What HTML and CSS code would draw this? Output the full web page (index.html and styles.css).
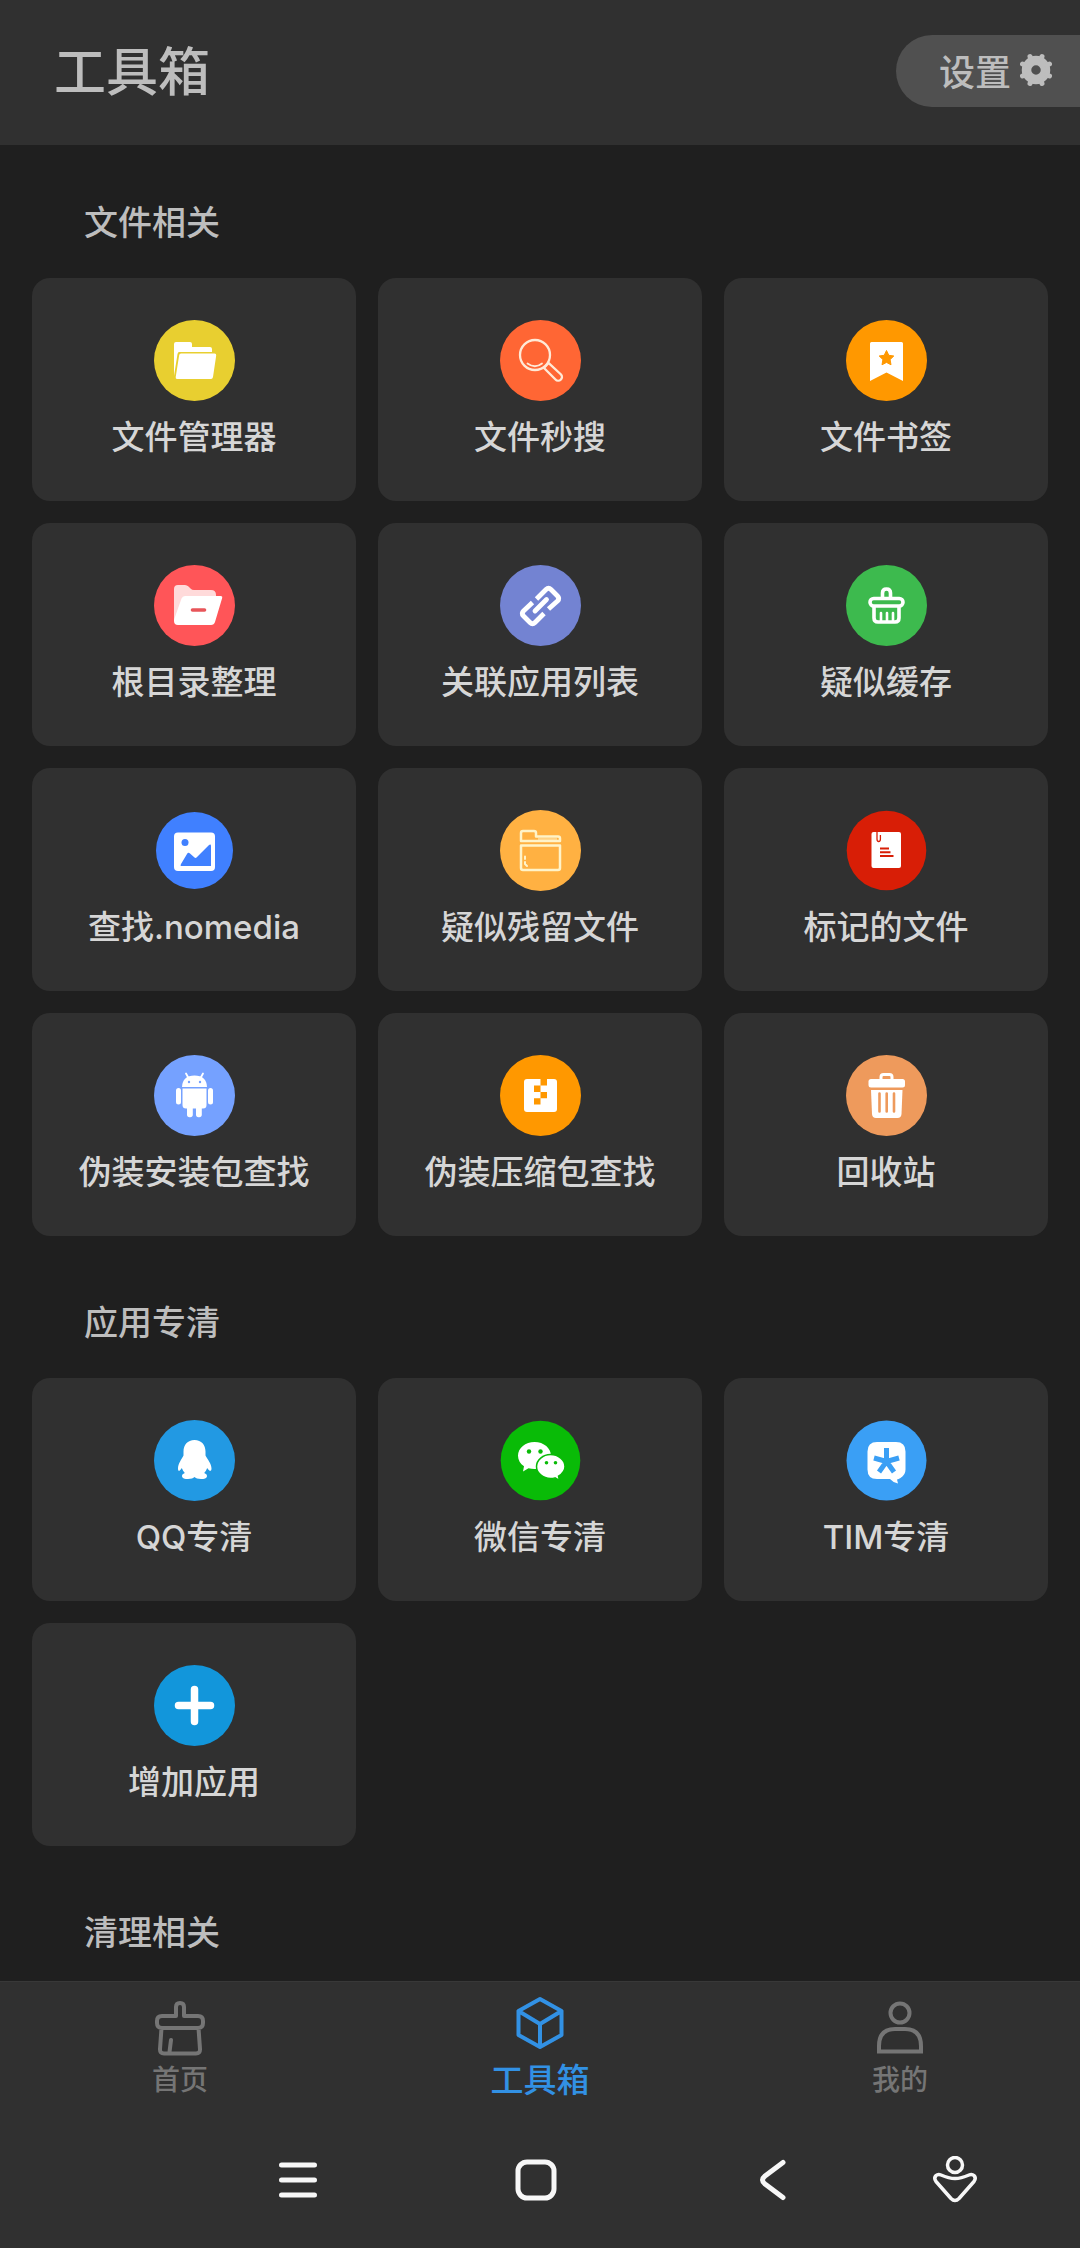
FILE: index.html
```html
<!DOCTYPE html>
<html lang="zh-CN">
<head>
  <meta charset="UTF-8">
  <meta name="viewport" content="width=device-width, initial-scale=1.0">
  <title>工具箱</title>
  <link rel="stylesheet" href="styles.css">
</head>
<body>
  <header class="header">
    <h1 class="header-title">工具箱</h1>
    <button class="settings" type="button">
      设置
      <svg class="gear" viewBox="0 0 34 34">
        <circle cx="17" cy="17" r="9.500" fill="none" stroke="currentColor" stroke-width="9.500"/>
        <path d="M12 6L11 3.500M22 6l1-2.500M12 28l-1 2.500M22 28l1 2.500M6 12l-2.500-1M6 22l-2.500 1M28 12l2.500-1M28 22l2.500 1" stroke="currentColor" stroke-width="5" stroke-linecap="round"/>
      </svg>
    </button>
  </header>

  <main class="content">
    <section class="section">
      <h2 class="section-title">文件相关</h2>
      <div class="grid">
        <button class="card" type="button">
          <svg class="icon" viewBox="0 0 81 81">
            <circle cx="40.5" cy="40.5" r="40.5" fill="#e8cf30"/>
            <path d="M20 56V24q0-2 2-2h14q2 0 2 2v3h18q2 0 2 2v3H25q-1 0-1.500 2z" fill="#fff"/>
            <path d="M27 33.500h33.500q2 0 1.700 2L59 57q-.4 2-2 2H23q-1.600 0-1.300-2l3.500-22q.3-1.500 1.800-1.500z" fill="#fff"/>
          </svg>
          <span class="label">文件管理器</span>
        </button>
        <button class="card" type="button">
          <svg class="icon" viewBox="0 0 81 81">
            <circle cx="40.5" cy="40.5" r="40.5" fill="#ff6634"/>
            <g fill="none" stroke="#ffe9d6" stroke-width="2.300" stroke-linecap="round">
              <circle cx="35" cy="35" r="15"/>
              <path d="M27.500 43.500q7.500 5.500 14.500 0" stroke-width="1.800"/>
              <path d="M44 48l11.500 11.500a3.600 3.600 0 0 0 5.500-5L48.500 43z"/>
            </g>
          </svg>
          <span class="label">文件秒搜</span>
        </button>
        <button class="card" type="button">
          <svg class="icon" viewBox="0 0 81 81">
            <circle cx="40.5" cy="40.5" r="40.5" fill="#ff9800"/>
            <path d="M25.500 22h30q1.500 0 1.500 1.500V61l-16.500-8.500L24 61V23.500q0-1.500 1.500-1.500z" fill="#fff"/>
            <path d="M40.500 30.500l2.300 4.800 5 .7-3.700 3.600.9 5.200-4.500-2.400-4.500 2.400.9-5.200-3.700-3.600 5-.7z" fill="#ff9800" stroke="#ff9800" stroke-linejoin="round"/>
          </svg>
          <span class="label">文件书签</span>
        </button>
        <button class="card" type="button">
          <svg class="icon" viewBox="0 0 81 81">
            <circle cx="40.5" cy="40.5" r="40.5" fill="#ff5558"/>
            <path d="M20 56V24q0-4 4-4h7q2 0 3.500 1.500l2 2Q38 25 40 25h17q5 0 5 5v6L30 56z" fill="#ffdada"/>
            <path d="M31 31h35.500q2.300 0 1.600 2.300L61 57q-1 3-4 3H24q-4 0-4-4 0-2 1-4l6.500-18.500Q28.500 31 31 31z" fill="#fff"/>
            <path d="M38.500 45h12" stroke="#e8555a" stroke-width="3.600" stroke-linecap="round"/>
          </svg>
          <span class="label">根目录整理</span>
        </button>
        <button class="card" type="button">
          <svg class="icon" viewBox="0 0 81 81">
            <circle cx="40.5" cy="40.5" r="40.5" fill="#7383d2"/>
            <g fill="none" stroke="#fff" stroke-width="4.800" stroke-linejoin="round">
              <path d="M36.500 34l9.500-9.500q2.500-2.500 5 0l6.500 6.500q2.500 2.500 0 5L48.500 44"/>
              <path d="M32.500 37.500L23.500 46q-2.500 2.500 0 5l6.500 6.500q2.500 2.500 5 0l9-9"/>
              <path d="M35 46l11.500-11.500" stroke-linecap="round"/>
            </g>
          </svg>
          <span class="label">关联应用列表</span>
        </button>
        <button class="card" type="button">
          <svg class="icon" viewBox="0 0 81 81">
            <circle cx="40.5" cy="40.5" r="40.5" fill="#3dba4e"/>
            <g fill="none" stroke="#fff" stroke-width="3.600" stroke-linecap="round" stroke-linejoin="round">
              <path d="M36.500 33v-5q0-4 4-4t4 4v5"/>
              <rect x="24" y="33.500" width="33" height="7.500" rx="3.700"/>
              <path d="M28 42v11q0 4 4 4h17q4 0 4-4V42"/>
              <path d="M35 48v8M41 48v8M47 48v8" stroke-width="2.600"/>
            </g>
          </svg>
          <span class="label">疑似缓存</span>
        </button>
        <button class="card" type="button">
          <svg class="icon" viewBox="0 0 81 81">
            <circle cx="40.5" cy="40.5" r="38.5" fill="#4080ff"/>
            <rect x="20" y="22.500" width="41" height="38.500" rx="4" fill="#fff"/>
            <circle cx="31" cy="32.500" r="3.500" fill="#4080ff"/>
            <path d="M27 56q-1 0 0-2l6-10q1.200-2 3-.5l4.500 4q1.200 1 2.500-.5L54.500 35.500Q57 33.500 57 36v20z" fill="#4080ff"/>
          </svg>
          <span class="label">查找.nomedia</span>
        </button>
        <button class="card" type="button">
          <svg class="icon" viewBox="0 0 81 81">
            <circle cx="40.5" cy="40.5" r="40.5" fill="#ffb142"/>
            <g fill="none" stroke="#fff3c8" stroke-width="2.500" stroke-linejoin="round">
              <path d="M21 31V23q0-2 2-2h11q2 0 2 2v3.500h22q2 0 2 2V31z"/>
              <path d="M38 29h19" stroke-width="1"/>
              <path d="M21 35.500h39V58q0 2-2 2H23q-2 0-2-2z"/>
              <path d="M25 46.500v2.500M25 52v2l2 2" stroke-width="2" stroke-linecap="round"/>
            </g>
          </svg>
          <span class="label">疑似残留文件</span>
        </button>
        <button class="card" type="button">
          <svg class="icon" viewBox="0 0 81 81">
            <circle cx="40.5" cy="40.5" r="39.8" fill="#d81e06"/>
            <rect x="25.500" y="22" width="29.500" height="36" rx="2" fill="#fff"/>
            <path d="M31 21.500v7.500q0 2.500 1.700 2.500t1.700-2.500v-4" fill="none" stroke="#d81e06" stroke-width="1.300"/>
            <path d="M34 38.500h9M34 42.200h10.500M34 46h13.500" stroke="#d81e06" stroke-width="2"/>
          </svg>
          <span class="label">标记的文件</span>
        </button>
        <button class="card" type="button">
          <svg class="icon" viewBox="0 0 81 81">
            <circle cx="40.5" cy="40.5" r="40.5" fill="#75a1ff"/>
            <g fill="#fff">
              <path d="M28 32q.5-11.500 12.500-11.500T53 32z"/>
              <path d="M32 18.500l2.500 4.500M49 18.500L46.500 23" stroke="#fff" stroke-width="1.800" stroke-linecap="round"/>
              <path d="M28.500 33.500h24V50q0 3.500-3.500 3.500H32q-3.500 0-3.500-3.500z"/>
              <rect x="22" y="33" width="5" height="16.500" rx="2.500"/>
              <rect x="54" y="33" width="5" height="16.500" rx="2.500"/>
              <rect x="33" y="49" width="5.800" height="13.200" rx="2.600"/>
              <rect x="42" y="49" width="5.800" height="13.200" rx="2.600"/>
            </g>
            <circle cx="35" cy="27" r="1.200" fill="#75a1ff"/>
            <circle cx="46" cy="27" r="1.200" fill="#75a1ff"/>
          </svg>
          <span class="label">伪装安装包查找</span>
        </button>
        <button class="card" type="button">
          <svg class="icon" viewBox="0 0 81 81">
            <circle cx="40.5" cy="40.5" r="40.5" fill="#ff9800"/>
            <rect x="24" y="24" width="33" height="33" rx="3" fill="#fff"/>
            <path d="M40.500 24H47v6.500h-6.500zM34 30.500h6.500V37H34zM40.500 37H47v6.200h-6.500zM34 43.200h6.500v6.300H34z" fill="#ff9800"/>
          </svg>
          <span class="label">伪装压缩包查找</span>
        </button>
        <button class="card" type="button">
          <svg class="icon" viewBox="0 0 81 81">
            <circle cx="40.5" cy="40.5" r="40.5" fill="#ee9a5c"/>
            <path d="M35 25v-3q0-2.500 2.500-2.500h6q2.500 0 2.500 2.500v3" fill="none" stroke="#fff" stroke-width="3"/>
            <rect x="22.500" y="24" width="36.500" height="8.500" rx="2.500" fill="#fff"/>
            <path d="M25 35h31.500L55.500 59q-.3 4-4 4H30q-3.700 0-4-4z" fill="#fff"/>
            <path d="M33.500 38.500v18M40.700 38.500v18M48 38.500v18" stroke="#ee9a5c" stroke-width="2.600" stroke-linecap="round"/>
          </svg>
          <span class="label">回收站</span>
        </button>
      </div>
    </section>

    <section class="section">
      <h2 class="section-title">应用专清</h2>
      <div class="grid">
        <button class="card" type="button">
          <svg class="icon" viewBox="0 0 81 81">
            <circle cx="40.5" cy="40.5" r="40.5" fill="#2299e3"/>
            <path d="M40.500 20c-7 0-11 5-11 11.500v4c-2 3.500-5.500 8.500-5.500 13 0 3.500 1.800 2.800 3.800-.5.700 2 1.700 3.700 3 5-2 .8-2.800 1.800-2.800 3 0 2.500 3 3 6 3s5.500-1 6.500-2c1 1 3.500 2 6.500 2s6-.5 6-3c0-1.200-.8-2.200-2.800-3 1.300-1.300 2.300-3 3-5 2 3.300 4.300 4 4.300.5 0-4.500-4-9.500-6-13v-4C51.500 25 47.500 20 40.500 20z" fill="#fff"/>
          </svg>
          <span class="label">QQ专清</span>
        </button>
        <button class="card" type="button">
          <svg class="icon" viewBox="0 0 81 81">
            <circle cx="40.5" cy="40.5" r="39.8" fill="#09bb07"/>
            <path d="M34.500 22C25.500 22 18 28 18 35.700c0 4.300 2.300 8 6 10.500L23 51.500l5.500-3.200q3 .8 6 .8C44 49 51 43 51 35.700S44 22 34.500 22z" fill="#fff"/>
            <path d="M50.500 34.500C43 34.500 36.500 40 36.500 46.500S43 58.500 50.500 58.500q2.500 0 4.500-.6l4.500 2.600-1-4.300c3.500-2.200 6.500-5.200 6.500-9.700C65 40 58.500 34.500 50.500 34.500z" fill="#fff" stroke="#09bb07" stroke-width="1.500"/>
            <g fill="#09bb07">
              <circle cx="29" cy="31.500" r="2.200"/>
              <circle cx="40.500" cy="31.500" r="2.200"/>
              <circle cx="46.500" cy="42.800" r="1.800"/>
              <circle cx="55.500" cy="42.800" r="1.800"/>
            </g>
          </svg>
          <span class="label">微信专清</span>
        </button>
        <button class="card" type="button">
          <svg class="icon" viewBox="0 0 81 81">
            <circle cx="40.5" cy="40.5" r="40" fill="#3a9ff5"/>
            <path d="M31 22h19q9.500 0 9.500 9.500v18q0 5.500-5 8.500-2 1-3.500 1.500l1 4q-5-1-8-4.500H31q-9.500 0-9.500-9.500v-18Q21.500 22 31 22z" fill="#fff"/>
            <path d="M40.500 41.500V28M40.500 41.500L28 38M40.500 41.500L53 38M40.500 41.500L33 52M40.500 41.500L48 52" stroke="#3a9ff5" stroke-width="5"/>
          </svg>
          <span class="label">TIM专清</span>
        </button>
        <button class="card" type="button">
          <svg class="icon" viewBox="0 0 81 81">
            <circle cx="40.5" cy="40.5" r="40.5" fill="#1296db"/>
            <path d="M40.500 24.500v32M24.500 40.500h32" stroke="#fff" stroke-width="7.500" stroke-linecap="round"/>
          </svg>
          <span class="label">增加应用</span>
        </button>
      </div>
    </section>

    <section class="section">
      <h2 class="section-title">清理相关</h2>
    </section>
  </main>

  <footer class="footer">
    <nav class="tabs">
      <a class="tab" href="#home">
        <svg class="tab-icon" viewBox="0 0 60 60">
          <path d="M26 20V11q0-4 4-4t4 4v9h14q5 0 5 5v2q0 5-5 5H12q-5 0-5-5v-2q0-5 5-5zM11.500 32L10 53q-.2 4.500 4 4.500h32q4.200 0 4-4.500L48.500 32M21 44l-1.500 12"/>
        </svg>
        <span>首页</span>
      </a>
      <a class="tab active" href="#tools">
        <svg class="tab-icon" viewBox="0 0 60 60">
          <path d="M30 3L51.500 15v24L30 51 8.500 39V15zM8.500 15L30 28l21.500-13M30 28v23"/>
        </svg>
        <span>工具箱</span>
      </a>
      <a class="tab" href="#mine">
        <svg class="tab-icon person" viewBox="0 0 60 60">
          <circle cx="30" cy="17" r="9.500"/>
          <path d="M9 55.500V50Q9 33 25 33h10q16 0 16 17v5.500z"/>
        </svg>
        <span>我的</span>
      </a>
    </nav>

    <div class="sysbar">
      <button class="sys" type="button" aria-label="菜单">
        <svg class="sys-icon" viewBox="0 0 48 48"><path d="M7.500 9h33M7.500 24h33M7.500 39h33" stroke-width="5"/></svg>
      </button>
      <button class="sys" type="button" aria-label="主屏幕">
        <svg class="sys-icon" viewBox="0 0 48 48"><rect x="6" y="6" width="36" height="36" rx="9" stroke-width="5"/></svg>
      </button>
      <button class="sys" type="button" aria-label="返回">
        <svg class="sys-icon" viewBox="0 0 48 48"><path d="M33 6.500L15 20q-5 4 0 8L33 41.500" stroke-width="5"/></svg>
      </button>
      <button class="sys" type="button" aria-label="快捷手势">
        <svg class="sys-icon" viewBox="0 0 48 48">
          <circle cx="24" cy="9" r="7.500" stroke-width="3.500"/>
          <path d="M24 22.500q6 0 14-3.500 3-1.300 5 .5 2.500 2.500 0 6L28 42.500q-4 4-8 0L5 25.500q-2.500-3.500 0-6 2-1.800 5-.5 8 3.500 14 3.500z" stroke-width="3.500"/>
        </svg>
      </button>
    </div>
  </footer>
</body>
</html>
```

FILE: styles.css
```css
*, *::before, *::after {
  box-sizing: border-box;
}

body {
  margin: 0;
  height: 100vh;
  display: flex;
  flex-direction: column;
  background-color: #1f1f1f;
  color: #bdbdbd;
  font-family: Inter, "Noto Sans CJK SC", sans-serif;
  font-weight: 500;
}

button {
  margin: 0;
  padding: 0;
  border: 0;
  background: none;
  color: inherit;
  font: inherit;
}

svg {
  display: block;
}

.header {
  flex: none;
  height: 145px;
  display: flex;
  justify-content: space-between;
  align-items: flex-start;
  padding: 35px 0 0 54px;
  background-color: #303030;
}

.header-title {
  margin: 0;
  font-size: 52px;
  font-weight: 500;
  line-height: 76px;
}

.settings {
  display: flex;
  align-items: center;
  gap: 8px;
  height: 72px;
  padding: 0 27px 2px 43px;
  border-radius: 36px 0 0 36px;
  background-color: #505050;
  font-size: 36px;
}

.gear {
  width: 34px;
  height: 34px;
}

.content {
  flex: 1;
  min-height: 0;
  overflow-y: auto;
  scrollbar-width: none;
  padding: 23px 32px 0;
}

.section + .section {
  margin-top: 32px;
}

.section-title {
  margin: 0;
  padding-left: 52px;
  font-size: 34px;
  font-weight: 500;
  line-height: 110px;
}

.grid {
  display: grid;
  grid-template-columns: repeat(3, 1fr);
  gap: 22px;
}

.card {
  display: flex;
  flex-direction: column;
  align-items: center;
  height: 223px;
  padding-top: 42px;
  border-radius: 18px;
  background-color: #303030;
  color: #d6d6d6;
}

.icon {
  width: 81px;
  height: 81px;
}

.label {
  margin-top: 12px;
  font-size: 33px;
  line-height: 48px;
}

.footer {
  flex: none;
  border-top: 1px solid #383838;
  background-color: #303030;
}

.tabs {
  display: grid;
  grid-template-columns: repeat(3, 1fr);
  height: 130px;
  padding-top: 14px;
}

.tab {
  display: flex;
  flex-direction: column;
  align-items: center;
  color: #757575;
  font-size: 28px;
  line-height: 48px;
  text-decoration: none;
}

.tab.active {
  color: #3291e4;
  font-size: 33px;
}

.tab-icon {
  width: 60px;
  height: 60px;
  fill: none;
  stroke: currentColor;
  stroke-width: 4;
  stroke-linejoin: round;
  stroke-linecap: round;
}

.tab-icon.person {
  stroke-linejoin: miter;
}

.sysbar {
  display: grid;
  grid-template-columns: 238fr 238fr 238fr 124fr;
  height: 136px;
  padding: 0 63px 0 179px;
}

.sys {
  display: flex;
  justify-content: center;
  align-items: center;
}

.sys-icon {
  width: 48px;
  height: 48px;
  fill: none;
  stroke: #f7f7f7;
  stroke-linecap: round;
  stroke-linejoin: round;
}
```
